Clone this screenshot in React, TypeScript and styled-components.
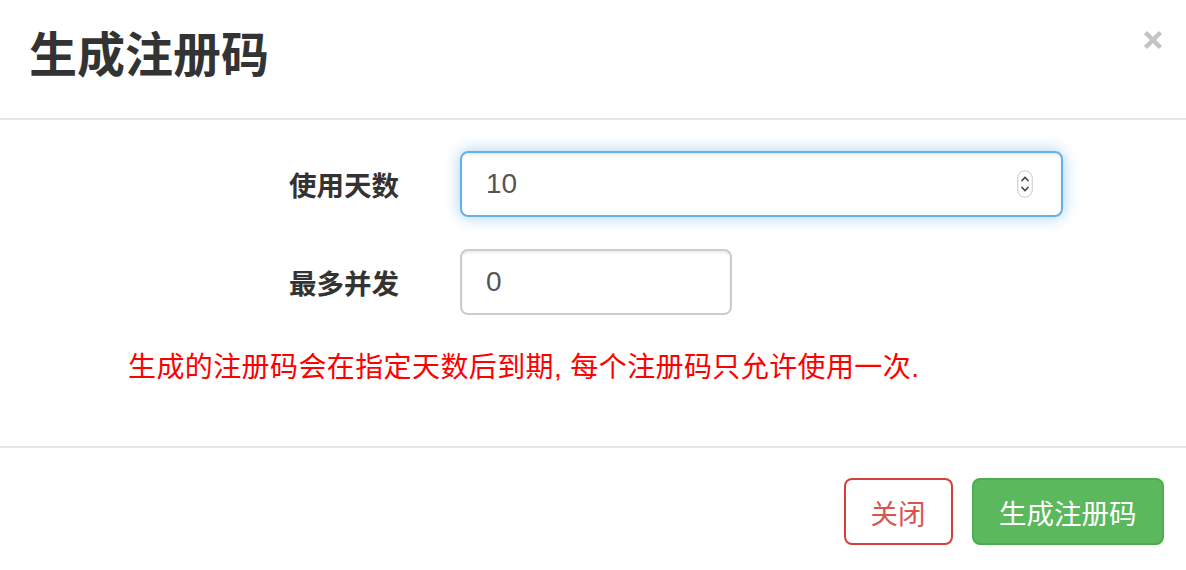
import styled, { createGlobalStyle } from "styled-components";

const GlobalStyle = createGlobalStyle`
  html, body {
    margin: 0;
    padding: 0;
    background: #fff;
  }
  body {
    font-family: "Liberation Sans", "Noto Sans CJK SC", sans-serif;
    color: #333;
  }
`;

const cjk = `"Liberation Sans", "Noto Sans CJK SC", sans-serif`;

const Modal = styled.div`
  width: 1186px;
  height: 570px;
  overflow: hidden;
  background: #fff;
  font-family: ${cjk};
`;

const Header = styled.div`
  display: flex;
  align-items: flex-start;
  justify-content: space-between;
  height: 120px;
  padding: 0 19px 0 29px;
  box-sizing: border-box;
  border-bottom: 2px solid #e5e5e5;
`;

const Title = styled.h4`
  margin: 0;
  padding-top: 24px;
  font-size: 48px;
  line-height: 64px;
  font-weight: 700;
  color: #333;
`;

const CloseX = styled.button`
  margin-top: 26px;
  padding: 0;
  border: 0;
  background: transparent;
  width: 28px;
  height: 28px;
  display: flex;
  align-items: center;
  justify-content: center;
  cursor: pointer;
`;

const Body = styled.div`
  padding: 31px 30px 0 30px;
  height: 328px;
  box-sizing: border-box;
  border-bottom: 2px solid #e5e5e5;
`;

const FormRow = styled.div`
  display: flex;
  align-items: center;
  margin-bottom: 32px;
`;

const Label = styled.label`
  width: 369px;
  margin-right: 61px;
  text-align: right;
  font-size: 27.5px;
  font-weight: 700;
  color: #333;
`;

const InputBox = styled.div<{ $width: number; $focused?: boolean }>`
  position: relative;
  width: ${(p) => p.$width}px;
  height: 66px;
  box-sizing: border-box;
  border-radius: 8px;
  border: 2px solid ${(p) => (p.$focused ? "#66afe9" : "#ccc")};
  box-shadow: ${(p) =>
    p.$focused
      ? "inset 0 2px 2px rgba(0,0,0,.075), 0 0 16px rgba(102,175,233,.6)"
      : "inset 0 2px 2px rgba(0,0,0,.075)"};
  display: flex;
  align-items: center;
`;

const Field = styled.input`
  flex: 1;
  border: 0;
  outline: none;
  background: transparent;
  padding: 0 0 0 24px;
  font-family: "Liberation Sans", Arial, sans-serif;
  font-size: 28px;
  color: #555;
  height: 100%;
`;

const Spinner = styled.div`
  margin-right: 28px;
  width: 16px;
  height: 28px;
  display: flex;
`;

const Help = styled.p`
  margin: 0 0 0 98px;
  font-size: 28px;
  letter-spacing: 0.4px;
  line-height: 42px;
  color: #ff0000;
`;

const Footer = styled.div`
  display: flex;
  justify-content: flex-end;
  gap: 19px;
  padding: 30px 22px 0 0;
`;

const Button = styled.button<{ $variant: "close" | "primary" }>`
  height: 67px;
  padding: 0 ${(p) => (p.$variant === "close" ? "25px" : "25.5px")};
  border-radius: 8px;
  font-family: ${cjk};
  font-size: 27.5px;
  cursor: pointer;
  border: 2px solid ${(p) => (p.$variant === "close" ? "#d43f3a" : "#4cae4c")};
  background: ${(p) => (p.$variant === "close" ? "#fff" : "#5cb85c")};
  color: ${(p) => (p.$variant === "close" ? "#d9534f" : "#fff")};
`;

export default function App() {
  return (
    <Modal>
      <GlobalStyle />
      <Header>
        <Title>生成注册码</Title>
        <CloseX aria-label="close">
          <svg width="20" height="20" viewBox="0 0 20 20">
            <path d="M2.5 2.5 L17.5 17.5 M17.5 2.5 L2.5 17.5" stroke="#c4c4c4" strokeWidth="4.5" strokeLinecap="butt" />
          </svg>
        </CloseX>
      </Header>
      <Body>
        <FormRow>
          <Label>使用天数</Label>
          <InputBox $width={603} $focused>
            <Field defaultValue="10" />
            <Spinner>
              <svg width="16" height="28" viewBox="0 0 16 28">
                <rect x="0.75" y="0.75" width="14.5" height="26.5" rx="7.25" fill="#fff" stroke="#c8c8c8" strokeWidth="1" />
                <path d="M4.5 11 L8 7.5 L11.5 11" fill="none" stroke="#444" strokeWidth="1.6" />
                <path d="M4.5 17 L8 20.5 L11.5 17" fill="none" stroke="#444" strokeWidth="1.6" />
              </svg>
            </Spinner>
          </InputBox>
        </FormRow>
        <FormRow>
          <Label>最多并发</Label>
          <InputBox $width={272}>
            <Field defaultValue="0" />
          </InputBox>
        </FormRow>
        <Help>生成的注册码会在指定天数后到期, 每个注册码只允许使用一次.</Help>
      </Body>
      <Footer>
        <Button $variant="close">关闭</Button>
        <Button $variant="primary">生成注册码</Button>
      </Footer>
    </Modal>
  );
}
